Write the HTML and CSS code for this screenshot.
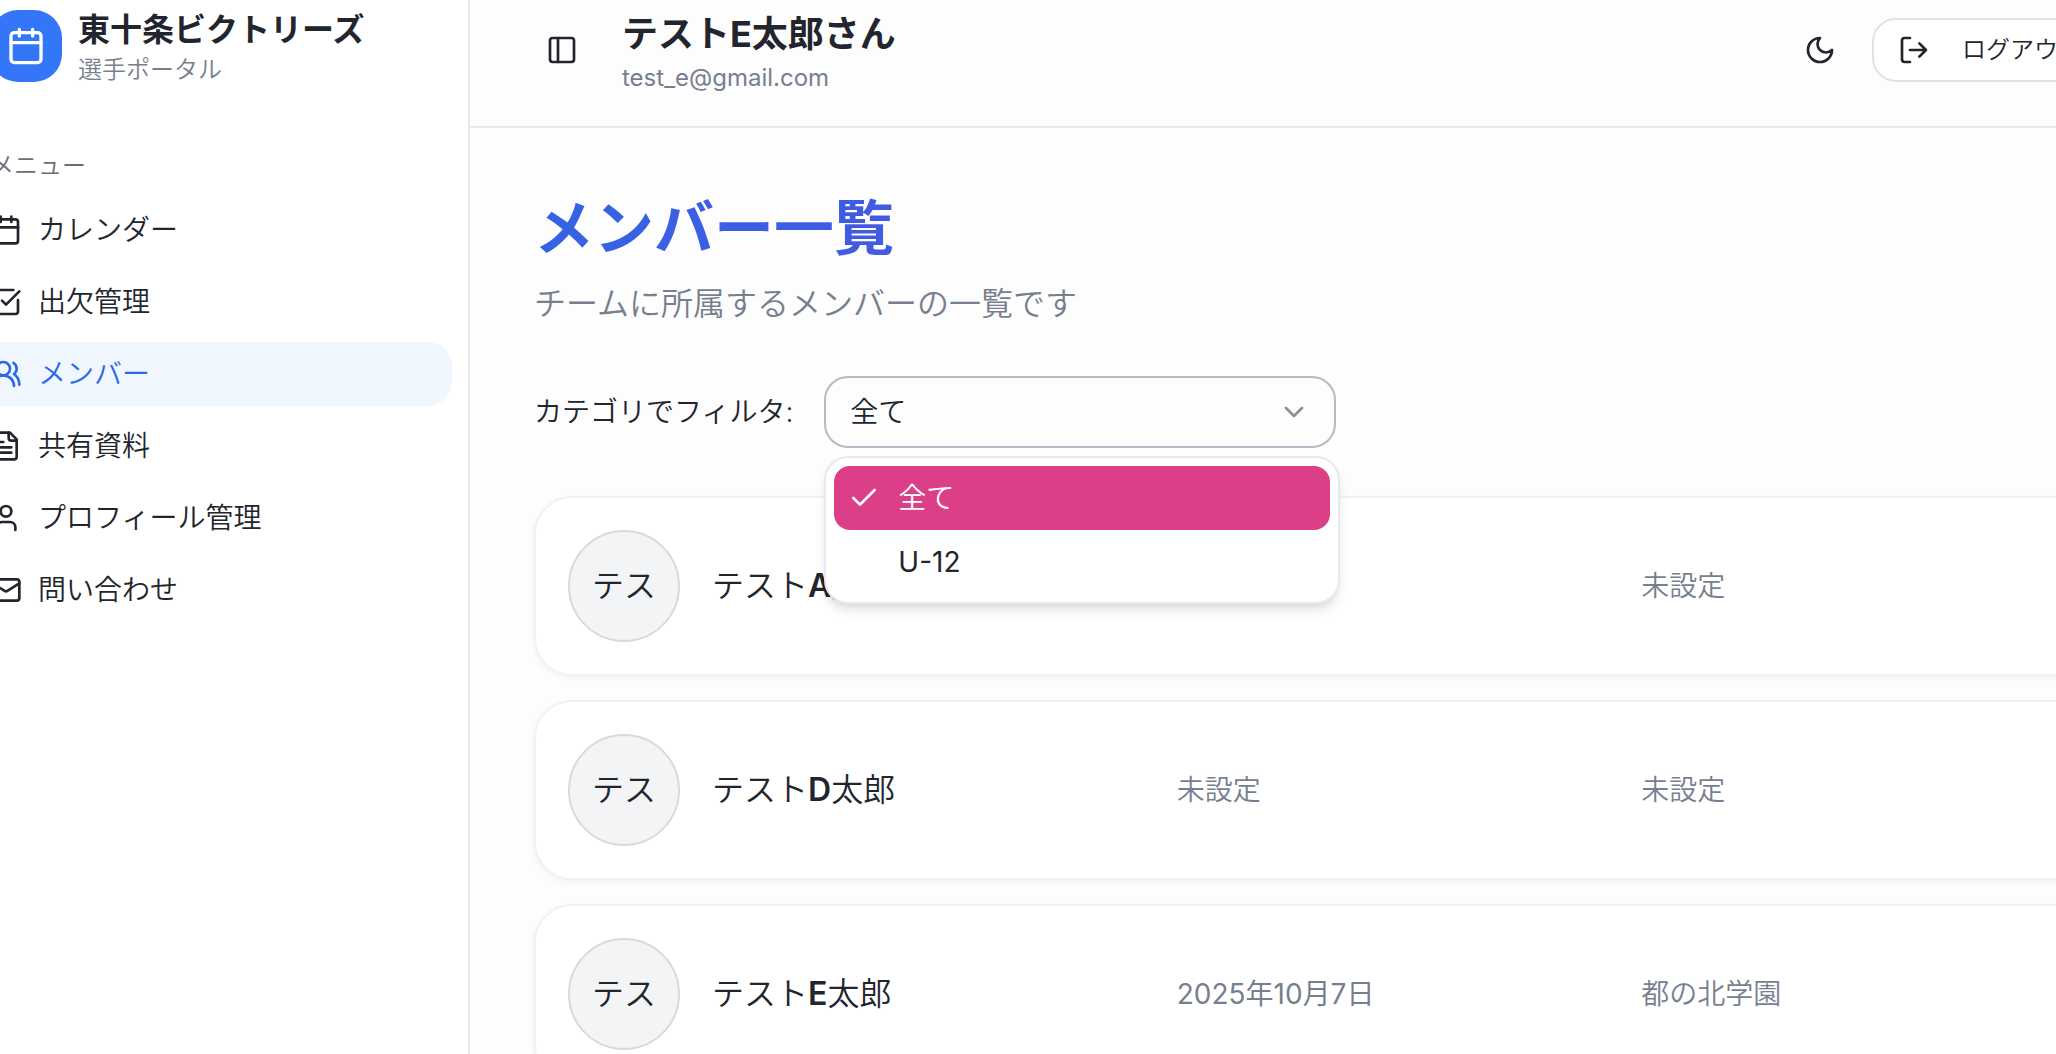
FILE: index.html
```html
<!DOCTYPE html>
<html lang="ja">
<head>
<meta charset="utf-8">
<meta name="viewport" content="width=device-width, initial-scale=1">
<title>メンバー一覧</title>
<link rel="stylesheet" href="styles.css">
</head>
<body>
<div class="shell">
  <aside class="sidebar">
    <div class="brand">
      <span class="brand-logo">
        <svg class="icon icon-lg" viewBox="0 0 24 24" aria-hidden="true"><path d="M8 2v4M16 2v4"/><rect x="3" y="4" width="18" height="18" rx="2"/><path d="M3 10h18"/></svg>
      </span>
      <div class="brand-text">
        <p class="brand-name">東十条ビクトリーズ</p>
        <p class="brand-sub">選手ポータル</p>
      </div>
    </div>
    <p class="nav-title">メニュー</p>
    <nav class="nav">
      <a class="nav-item" href="#calendar"><svg class="icon" viewBox="0 0 24 24" aria-hidden="true"><path d="M8 2v4M16 2v4"/><rect x="3" y="4" width="18" height="18" rx="2"/><path d="M3 10h18"/></svg>カレンダー</a>
      <a class="nav-item" href="#attendance"><svg class="icon" viewBox="0 0 24 24" aria-hidden="true"><path d="M21 10.5V19a2 2 0 0 1-2 2H5a2 2 0 0 1-2-2V5a2 2 0 0 1 2-2h12.5"/><path d="m9 11 3 3L22 4"/></svg>出欠管理</a>
      <a class="nav-item active" href="#members" aria-current="page"><svg class="icon" viewBox="0 0 24 24" aria-hidden="true"><path d="M18 21a8 8 0 0 0-16 0"/><circle cx="10" cy="8" r="5"/><path d="M22 20c0-3.37-2-6.5-4-8a5 5 0 0 0-.45-8.3"/></svg>メンバー</a>
      <a class="nav-item" href="#files"><svg class="icon" viewBox="0 0 24 24" aria-hidden="true"><path d="M15 2H6a2 2 0 0 0-2 2v16a2 2 0 0 0 2 2h12a2 2 0 0 0 2-2V7Z"/><path d="M14 2v4a2 2 0 0 0 2 2h4M10 9H8M16 13H8M16 17H8"/></svg>共有資料</a>
      <a class="nav-item" href="#profile"><svg class="icon" viewBox="0 0 24 24" aria-hidden="true"><path d="M19 21v-2a4 4 0 0 0-4-4H9a4 4 0 0 0-4 4v2"/><circle cx="12" cy="7" r="4"/></svg>プロフィール管理</a>
      <a class="nav-item" href="#contact"><svg class="icon" viewBox="0 0 24 24" aria-hidden="true"><rect x="2" y="4" width="20" height="16" rx="2"/><path d="m22 7-8.97 5.7a1.94 1.94 0 0 1-2.06 0L2 7"/></svg>問い合わせ</a>
    </nav>
  </aside>

  <div class="page">
    <header class="topbar">
      <button class="icon-button" type="button" aria-label="サイドバー"><svg class="icon" viewBox="0 0 24 24" aria-hidden="true"><rect x="3" y="3" width="18" height="18" rx="2"/><path d="M9 3v18"/></svg></button>
      <div class="account">
        <p class="account-name">テストE太郎さん</p>
        <p class="account-mail">test_e@gmail.com</p>
      </div>
      <button class="icon-button" type="button" aria-label="テーマ"><svg class="icon" viewBox="0 0 24 24" aria-hidden="true"><path d="M12 3a6 6 0 0 0 9 9 9 9 0 1 1-9-9Z"/></svg></button>
      <button class="logout" type="button"><svg class="icon" viewBox="0 0 24 24" aria-hidden="true"><path d="M9 21H5a2 2 0 0 1-2-2V5a2 2 0 0 1 2-2h4"/><path d="m16 17 5-5-5-5M21 12H9"/></svg>ログアウト</button>
    </header>

    <main class="content">
      <h1 class="title">メンバー一覧</h1>
      <p class="lead">チームに所属するメンバーの一覧です</p>

      <div class="filter">
        <label class="filter-label" for="category">カテゴリでフィルタ:</label>
        <div class="picker">
          <select class="picker-select" id="category">
            <option selected>全て</option>
            <option>U-12</option>
          </select>
          <svg class="icon picker-arrow" viewBox="0 0 24 24" aria-hidden="true"><path d="m6 9 6 6 6-6"/></svg>
          <ul class="menu" role="listbox" aria-label="カテゴリ">
            <li class="option selected" role="option" aria-selected="true"><svg class="icon" viewBox="0 0 24 24" aria-hidden="true"><path d="M20 6 9 17l-5-5"/></svg>全て</li>
            <li class="option" role="option" aria-selected="false">U-12</li>
          </ul>
        </div>
      </div>

      <ul class="members">
        <li class="card">
          <span class="avatar">テス</span>
          <div class="fields"><p class="name">テスト<b class="latin">A</b>太郎</p><p class="detail">未設定</p><p class="detail">未設定</p></div>
        </li>
        <li class="card">
          <span class="avatar">テス</span>
          <div class="fields"><p class="name">テスト<b class="latin">D</b>太郎</p><p class="detail">未設定</p><p class="detail">未設定</p></div>
        </li>
        <li class="card">
          <span class="avatar">テス</span>
          <div class="fields"><p class="name">テスト<b class="latin">E</b>太郎</p><p class="detail date">2025年10月7日</p><p class="detail">都の北学園</p></div>
        </li>
      </ul>
    </main>
  </div>
</div>
</body>
</html>
```
FILE: styles.css
```css
* { box-sizing: border-box; }

body, p, h1, ul { margin: 0; padding: 0; }
ul { list-style: none; }

body {
  height: 100vh;
  overflow: hidden;
  background: #fdfdfd;
  color: #22252d;
  font-family: Inter, "Noto Sans CJK JP", sans-serif;
  font-size: 28px;
  font-weight: 350;
  line-height: 40px;
}

button, select { font: inherit; color: inherit; }

.icon {
  flex: none;
  width: 32px;
  height: 32px;
  fill: none;
  stroke: currentColor;
  stroke-width: 2;
  stroke-linecap: round;
  stroke-linejoin: round;
}
.icon-lg { width: 40px; height: 40px; }

/* The shell is larger than the window and bleeds past its edges */
.shell {
  display: flex;
  width: calc(100% + 158px);
  min-height: calc(100vh + 26px);
  margin: -26px 0 0 -42px;
}

/* Sidebar */
.sidebar {
  flex: none;
  width: 512px;
  padding: 32px 16px;
  background: #fff;
  border-right: 2px solid #e8e8ef;
}
.brand {
  display: flex;
  align-items: center;
  gap: 16px;
  height: 80px;
  padding: 0 16px;
}
.brand-logo {
  display: grid;
  place-items: center;
  width: 72px;
  height: 72px;
  border-radius: 28px;
  background: #3377f8;
  color: #fff;
}
.brand-text { padding-top: 8px; }
.brand-name { font-size: 32px; font-weight: 700; }
.brand-sub { font-size: 24px; color: #777f8f; }
.nav-title {
  margin: 60px 0 12px;
  padding: 0 16px;
  font-size: 24px;
  color: #6c6e74;
}
.nav { display: grid; gap: 8px; }
.nav-item {
  display: flex;
  align-items: center;
  gap: 16px;
  height: 64px;
  padding: 0 16px;
  border-radius: 24px;
  color: inherit;
  text-decoration: none;
}
.nav-item.active { background: #f0f7ff; color: #2b68ec; }

/* Top bar */
.page { flex: 1; min-width: 0; }
.topbar {
  display: flex;
  align-items: center;
  height: 154px;
  padding: 0 64px;
  border-bottom: 2px solid #e8e8ef;
}
.icon-button {
  display: grid;
  place-items: center;
  width: 56px;
  height: 56px;
  padding: 0;
  border: 0;
  background: none;
}
.account { flex: 1; margin-left: 32px; padding-top: 8px; }
.account-name { font-size: 36px; font-weight: 700; line-height: 48px; }
.account-mail { font-size: 24px; font-weight: 400; color: #777f8f; }
.logout {
  display: flex;
  align-items: center;
  gap: 32px;
  height: 64px;
  margin-left: 24px;
  padding: 0 24px;
  border: 2px solid #e2e2e4;
  border-radius: 24px;
  background: #fff;
  font-size: 24px;
}

/* Content */
.content { padding: 64px; }
.title {
  font-size: 60px;
  font-weight: 700;
  line-height: 72px;
  background: linear-gradient(to right, #3563e3, #6d3fe0);
  background-clip: text;
  -webkit-background-clip: text;
  color: transparent;
}
.lead { margin-top: 16px; font-size: 32px; line-height: 48px; color: #777f8f; }
.filter {
  display: flex;
  align-items: center;
  gap: 31px;
  margin-top: 48px;
}
.picker { position: relative; width: 512px; }
.picker-select {
  display: block;
  appearance: none;
  width: 100%;
  height: 72px;
  padding: 0 24px;
  border: 2px solid #b6bac6;
  border-radius: 24px;
  background: #fdfdfd;
}
.picker-arrow {
  position: absolute;
  top: 20px;
  right: 26px;
  color: #8f9094;
  pointer-events: none;
}
.menu {
  position: absolute;
  z-index: 1;
  top: 80px;
  left: 0;
  width: 516px;
  padding: 8px;
  border: 2px solid #e8e8ef;
  border-radius: 24px;
  background: #fff;
  box-shadow: 0 8px 12px -2px rgb(0 0 0 / 10%), 0 4px 8px -4px rgb(0 0 0 / 10%);
}
.option {
  display: flex;
  align-items: center;
  height: 64px;
  padding-left: 64px;
  border-radius: 16px;
  font-weight: 400;
}
.option.selected {
  gap: 18px;
  padding-left: 14px;
  background: #db3f88;
  color: #fff;
  font-weight: 350;
}

.members { display: grid; gap: 24px; margin-top: 48px; }
.card {
  display: flex;
  align-items: center;
  gap: 32px;
  padding: 32px;
  border: 2px solid #f2f2f3;
  border-radius: 38px;
  background: #fff;
  box-shadow: 0 2px 6px rgb(0 0 0 / 5%);
}
.avatar {
  flex: none;
  display: grid;
  place-items: center;
  width: 112px;
  height: 112px;
  border: 2px solid #d9dadc;
  border-radius: 50%;
  background: #f3f4f6;
  font-size: 32px;
}
.fields {
  flex: 1;
  display: grid;
  grid-template-columns: repeat(3, 1fr);
  gap: 32px;
  align-items: center;
}
.name { font-size: 32px; }
.latin { font-weight: 600; }
.detail { color: #777f8f; }
.date { font-weight: 400; }
```
